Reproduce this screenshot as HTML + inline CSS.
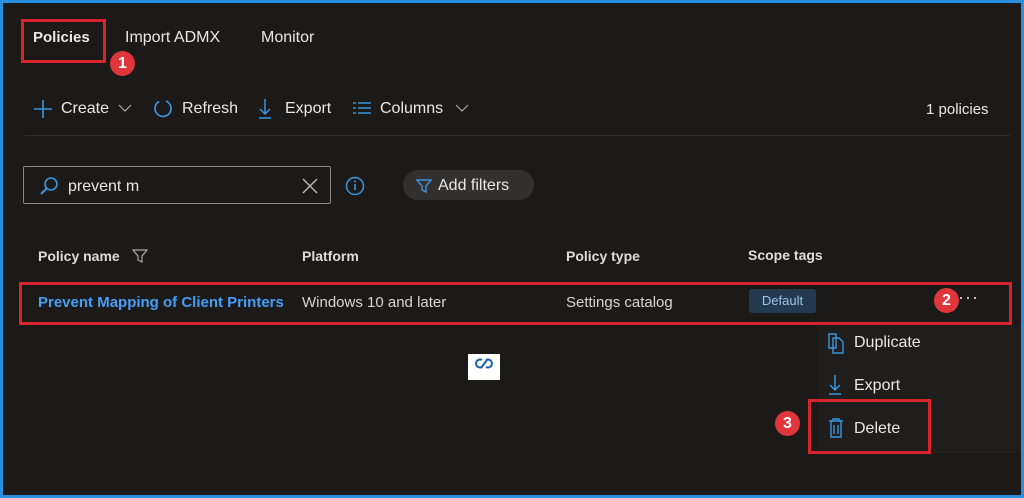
<!DOCTYPE html>
<html><head><meta charset="utf-8"><style>
*{margin:0;padding:0;box-sizing:border-box}
body{width:1024px;height:498px;background:#2b8fe0;font-family:"Liberation Sans",sans-serif;overflow:hidden;position:relative}
#m{position:absolute;left:3px;top:3px;width:1018px;height:492px;background:#1b1a19;color:#e8e8e8}
.a{position:absolute;white-space:nowrap}
.rb{position:absolute;border:3px solid #d9232d}
.bd{position:absolute;width:25px;height:25px;border-radius:50%;background:#e0353b;color:#fff;font-weight:bold;font-size:16px;text-align:center;line-height:25px}
.t{font-size:16px}
.h{font-size:14px;font-weight:bold;color:#ddd}
</style></head><body><div id="m">
<div class="a t" style="left:30px;top:26px;font-weight:bold;font-size:15px">Policies</div>
<div class="a t" style="left:122px;top:26px">Import ADMX</div>
<div class="a t" style="left:258px;top:26px">Monitor</div>
<div class="rb" style="left:18px;top:16px;width:85px;height:44px"></div>
<div class="bd" style="left:107px;top:48px">1</div>

<svg class="a" style="left:30px;top:96px" width="20" height="20"><path d="M10 1v18M1 10h18" stroke="#3a96dd" stroke-width="1.6"/></svg>
<div class="a t" style="left:58px;top:97px">Create</div>
<svg class="a" style="left:115px;top:100px" width="14" height="10"><path d="M1 2l6 6 6-6" stroke="#aaa" fill="none" stroke-width="1.2"/></svg>
<svg class="a" style="left:149px;top:95px" width="22" height="22"><path d="M7 3.5A8 8 0 1 0 14 3" stroke="#3a96dd" fill="none" stroke-width="1.7"/></svg>
<div class="a t" style="left:179px;top:97px">Refresh</div>
<svg class="a" style="left:255px;top:95px" width="14" height="22"><path d="M7 1v15M2 11l5 5 5-5M1 20h12" stroke="#3a96dd" fill="none" stroke-width="1.5"/></svg>
<div class="a t" style="left:282px;top:97px">Export</div>
<svg class="a" style="left:349px;top:98px" width="20" height="16"><path d="M1 2h3M1 7h3M1 12h3M6 2h13M6 7h13M6 12h13" stroke="#3a96dd" stroke-width="1.6"/></svg>
<div class="a t" style="left:377px;top:97px">Columns</div>
<svg class="a" style="left:452px;top:100px" width="14" height="10"><path d="M1 2l6 6 6-6" stroke="#aaa" fill="none" stroke-width="1.2"/></svg>
<div class="a" style="left:923px;top:98px;font-size:15px">1 policies</div>
<div class="a" style="left:22px;top:132px;width:985px;height:1px;background:#2e2d2c"></div>

<div class="a" style="left:20px;top:163px;width:308px;height:38px;border:1px solid #8a8886;border-radius:2px"></div>
<svg class="a" style="left:36px;top:173px" width="20" height="20"><circle cx="12" cy="8" r="6" stroke="#3a96dd" fill="none" stroke-width="1.6"/><path d="M8 12l-6 6" stroke="#3a96dd" stroke-width="2"/></svg>
<div class="a t" style="left:65px;top:175px">prevent m</div>
<svg class="a" style="left:299px;top:175px" width="16" height="16"><path d="M1 1l14 14M15 1L1 15" stroke="#bbb" stroke-width="1.4"/></svg>
<svg class="a" style="left:342px;top:173px" width="20" height="20"><circle cx="10" cy="10" r="8.5" stroke="#3a96dd" fill="none" stroke-width="1.5"/><path d="M10 8v6" stroke="#3a96dd" stroke-width="1.6"/><circle cx="10" cy="5.5" r="1" fill="#3a96dd"/></svg>
<div class="a" style="left:400px;top:167px;width:131px;height:30px;border-radius:15px;background:#323130"></div>
<svg class="a" style="left:413px;top:176px" width="16" height="14"><path d="M1 1h14l-5 6v6l-4-2V7z" stroke="#3a96dd" fill="none" stroke-width="1.4"/></svg>
<div class="a t" style="left:435px;top:174px">Add filters</div>

<div class="a h" style="left:35px;top:245px">Policy name</div>
<svg class="a" style="left:129px;top:246px" width="16" height="14"><path d="M1 1h14l-5 6v6l-4-2V7z" stroke="#aaa" fill="none" stroke-width="1.2"/></svg>
<div class="a h" style="left:299px;top:245px">Platform</div>
<div class="a h" style="left:563px;top:245px">Policy type</div>
<div class="a h" style="left:745px;top:244px">Scope tags</div>

<div class="a" style="left:35px;top:291px;font-size:15px;font-weight:bold;color:#479ef5">Prevent Mapping of Client Printers</div>
<div class="a" style="left:299px;top:291px;font-size:15px;color:#d6d6d6">Windows 10 and later</div>
<div class="a" style="left:563px;top:291px;font-size:15px;color:#d6d6d6">Settings catalog</div>
<div class="a" style="left:746px;top:286px;width:67px;height:24px;border-radius:3px;background:#243a51;color:#9cc3e8;font-size:13px;text-align:center;line-height:24px">Default</div>
<div class="a" style="left:955px;top:284px;font-size:18px;letter-spacing:1px;color:#ddd">···</div>
<div class="rb" style="left:16px;top:279px;width:993px;height:43px"></div>
<div class="bd" style="left:931px;top:285px">2</div>

<div class="a" style="left:815px;top:322px;width:203px;height:128px;background:#1f1e1d"></div>
<svg class="a" style="left:823px;top:329px" width="20" height="22"><path d="M3 2h7v14H3zM7 6h6l4 4v11H7z" stroke="#3a96dd" fill="none" stroke-width="1.4"/></svg>
<div class="a t" style="left:851px;top:331px">Duplicate</div>
<svg class="a" style="left:825px;top:371px" width="14" height="22"><path d="M7 1v15M2 11l5 5 5-5M1 20h12" stroke="#3a96dd" fill="none" stroke-width="1.5"/></svg>
<div class="a t" style="left:851px;top:374px">Export</div>
<svg class="a" style="left:825px;top:414px" width="16" height="22"><path d="M1 4h14M5 4V2h6v2M3 4v16h10V4M6 8v9M10 8v9" stroke="#3a96dd" fill="none" stroke-width="1.4"/></svg>
<div class="a t" style="left:851px;top:417px">Delete</div>
<div class="rb" style="left:805px;top:396px;width:123px;height:55px"></div>
<div class="bd" style="left:772px;top:408px">3</div>

<div class="a" style="left:465px;top:351px;width:32px;height:26px;background:#fff"></div>
<svg class="a" style="left:470px;top:354px" width="22" height="14"><path d="M9 3a4 4 0 1 0 0 7M13 10a4 4 0 1 0 0-7M8 11l6-8" stroke="#1a5fa8" fill="none" stroke-width="2"/></svg>
</div></body></html>
